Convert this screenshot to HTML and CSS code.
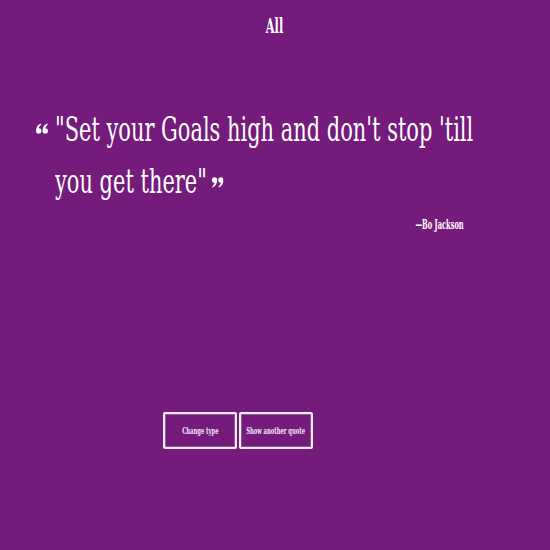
FILE: index.html
```html
<!DOCTYPE html>
<html lang="en">
<head>
<meta charset="utf-8">
<title>Random quote</title>
<link rel="stylesheet" href="styles.css">
</head>
<body>
<main class="page">
  <h1 class="category"><span class="squeeze">All</span></h1>
  <section class="quote">
    <div class="quote-row">
      <svg class="mark-open" viewBox="0 0 22 20" aria-hidden="true">
        <path d="M0 14.5C0 8 3 3.5 8.5 1L9.5 3C7 4.5 5.5 6.5 5.3 9.5A5 5 0 1 1 0 14.5Z"/>
        <path d="M12 14.5C12 8 15 3.5 20.5 1L21.5 3C19 4.5 17.5 6.5 17.3 9.5A5 5 0 1 1 12 14.5Z"/>
      </svg>
      <p class="quote-text"><span class="squeeze-left">"Set your Goals high and don't stop 'till<br>you get there"<svg class="mark-close" viewBox="0 0 22 20" preserveAspectRatio="none" aria-hidden="true">
        <g transform="rotate(180 11 10)">
          <path d="M0 14.5C0 8 3 3.5 8.5 1L9.5 3C7 4.5 5.5 6.5 5.3 9.5A5 5 0 1 1 0 14.5Z"/>
          <path d="M12 14.5C12 8 15 3.5 20.5 1L21.5 3C19 4.5 17.5 6.5 17.3 9.5A5 5 0 1 1 12 14.5Z"/>
        </g>
      </svg></span></p>
    </div>
    <p class="author"><span class="squeeze-right">&mdash;Bo Jackson</span></p>
  </section>
  <div class="actions">
    <button class="btn" type="button"><span class="squeeze">Change type</span></button>
    <button class="btn" type="button"><span class="squeeze">Show another quote</span></button>
  </div>
</main>
</body>
</html>
```
FILE: styles.css
```css
html, body {
  margin: 0;
  height: 100%;
}
body {
  background: #741b7b;
  color: #ffffff;
  font-family: "DejaVu Serif Condensed", "DejaVu Serif", serif;
  overflow: hidden;
}
.page {
  display: flex;
  flex-direction: column;
}
.squeeze, .squeeze-left, .squeeze-right {
  display: inline-block;
  transform: scaleX(0.6);
  white-space: nowrap;
}
.squeeze { transform-origin: center; }
.squeeze-left { transform-origin: left; transform: scaleX(0.685); }
.squeeze-right { transform-origin: right; transform: scaleX(0.57); }

.category {
  margin: 0;
  padding-top: 14px;
  font-size: 21px;
  line-height: 24px;
  font-weight: bold;
  text-align: center;
}
.quote {
  margin-top: 65px;
}
.quote-row {
  display: flex;
  align-items: flex-start;
  padding-left: 36px;
}
.mark-open {
  flex: none;
  width: 12px;
  height: 11px;
  margin-top: 20px;
  margin-right: 7px;
  fill: #ffffff;
}
.mark-close {
  width: 17px;
  height: 11px;
  margin-left: 7px;
  vertical-align: 5px;
  fill: #ffffff;
}
.quote-text {
  flex: 1;
  min-width: 0;
  overflow: hidden;
  margin: 0;
  font-size: 34px;
  line-height: 52px;
}
.author {
  margin: 10px 0 0;
  padding-right: 86px;
  text-align: right;
  font-size: 13px;
  line-height: 16px;
  font-weight: bold;
}
.actions {
  margin-top: 179px;
  padding-left: 163px;
  display: flex;
  gap: 2px;
}
.btn {
  display: flex;
  align-items: center;
  justify-content: center;
  width: 74px;
  height: 37px;
  padding: 0;
  background: transparent;
  border: 2px solid #f4eef5;
  border-radius: 2px;
  box-shadow: inset 0 0 0 1px rgba(255, 255, 255, 0.25);
  color: #f3eaf4;
  font-family: "DejaVu Serif Condensed", "DejaVu Serif", serif;
  font-weight: bold;
  font-size: 10px;
  overflow: visible;
}
.btn .squeeze {
  transform: scaleX(0.58);
}
```
